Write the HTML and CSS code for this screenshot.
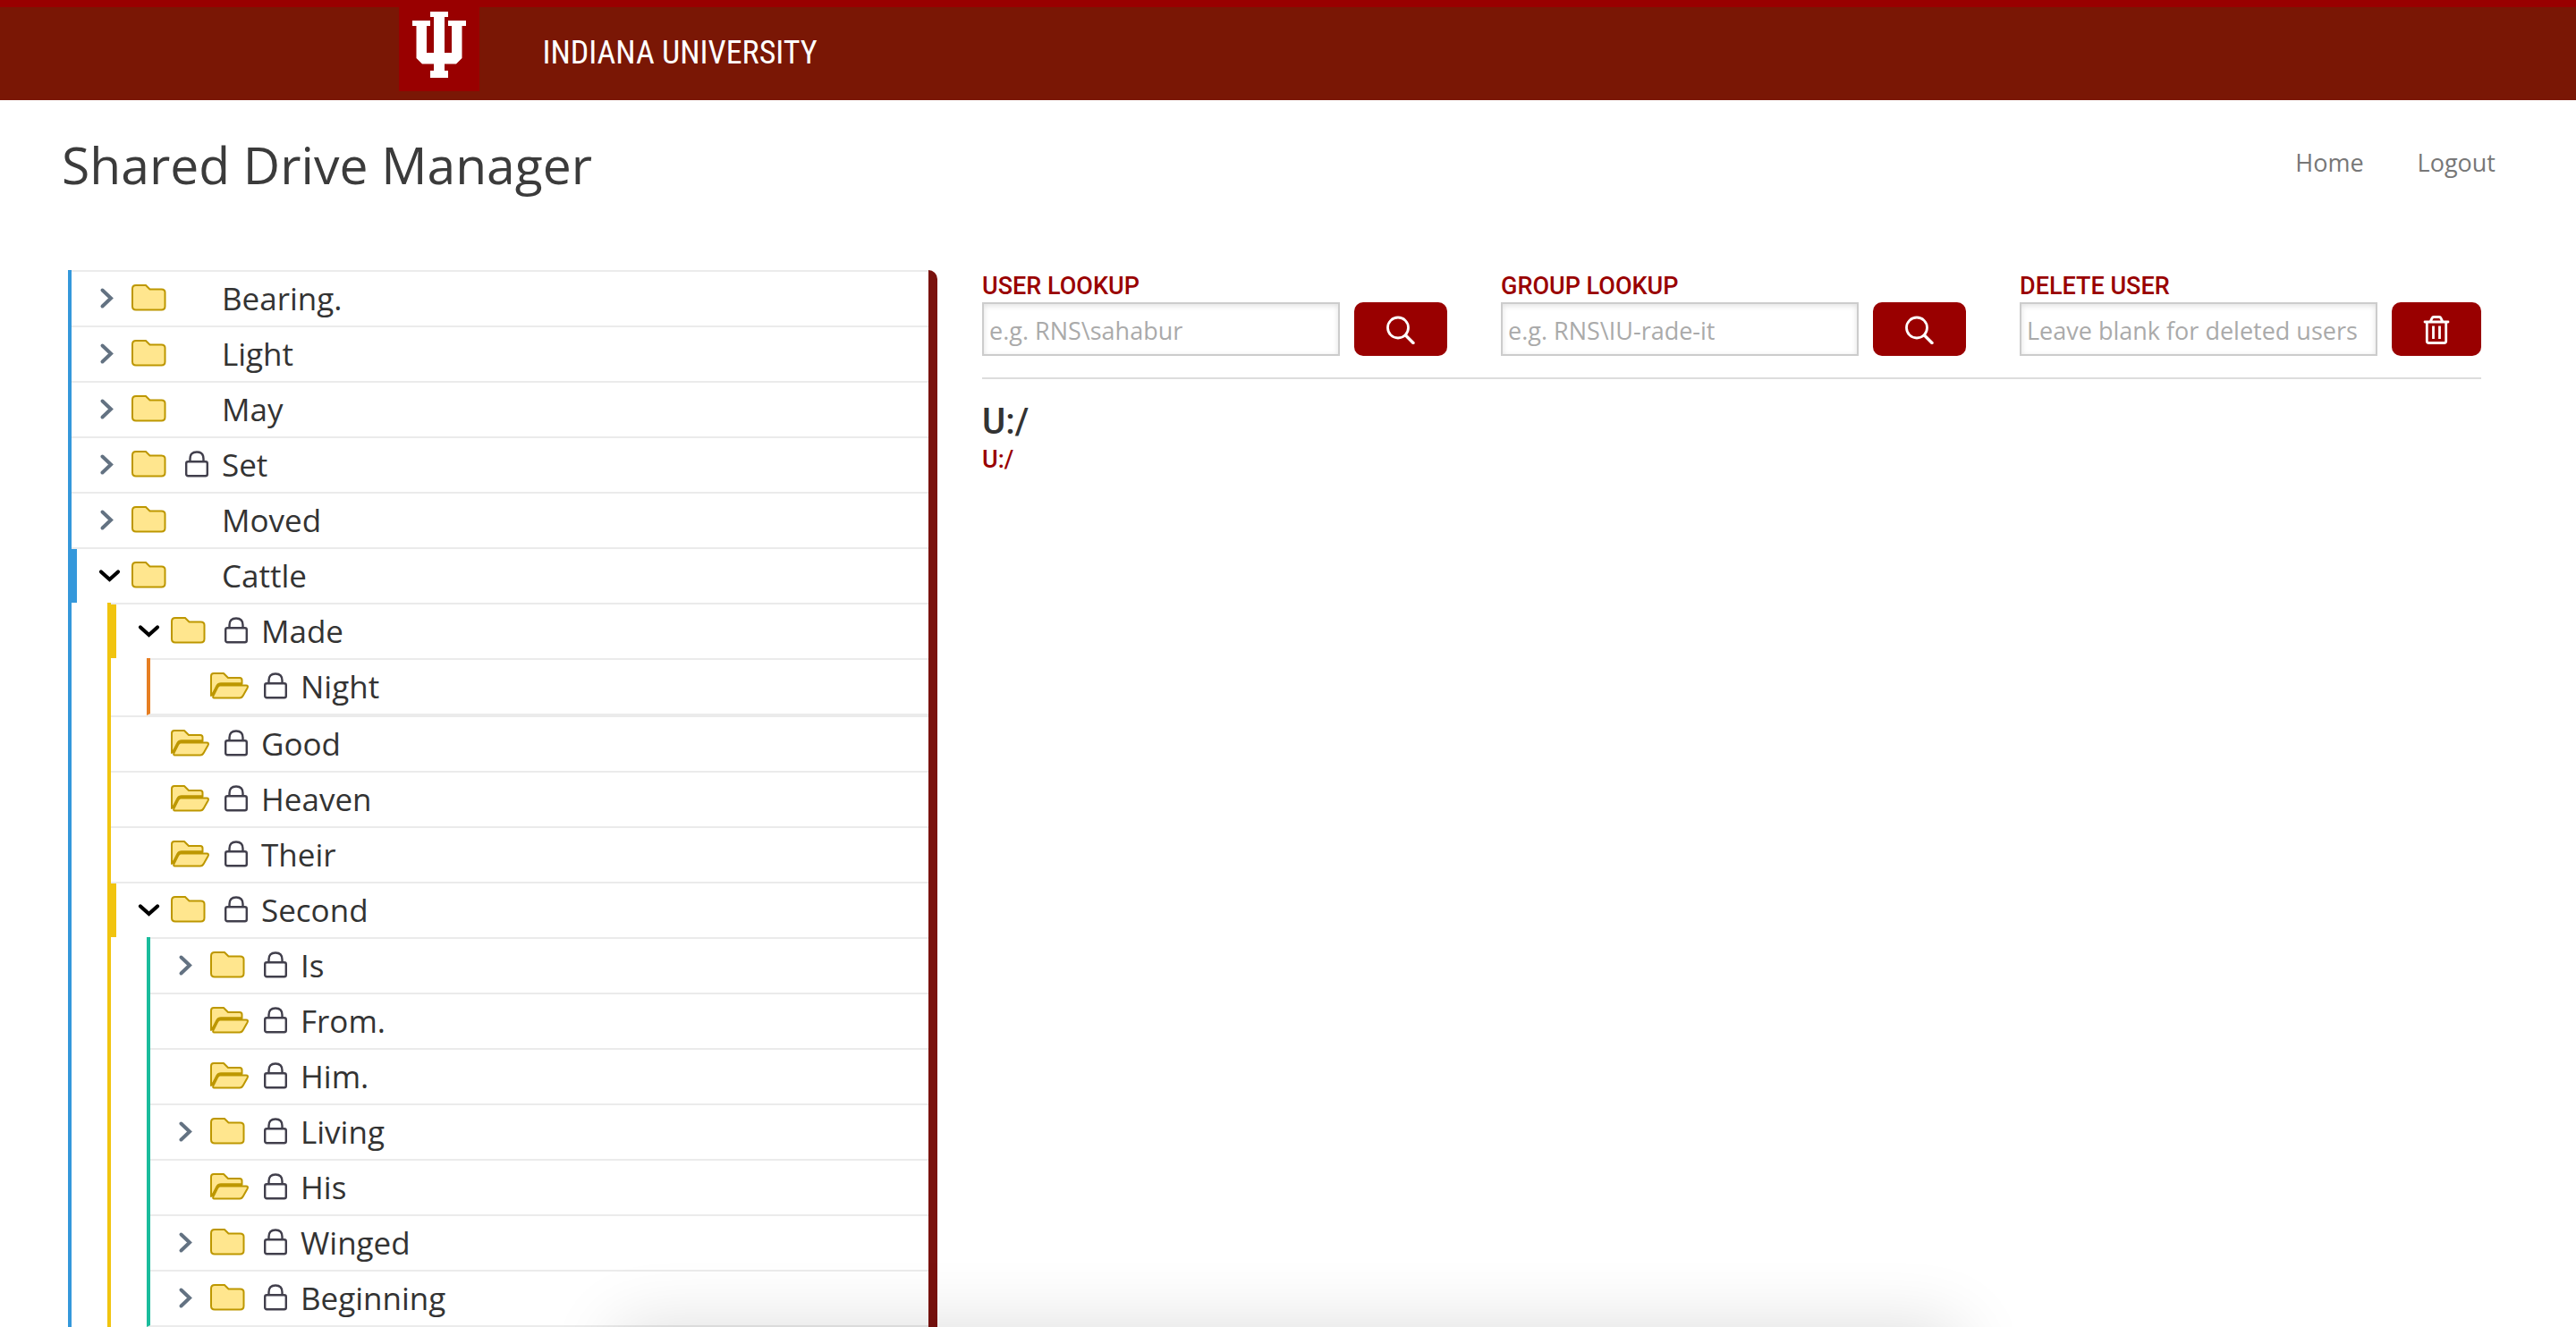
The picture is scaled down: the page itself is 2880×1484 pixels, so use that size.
FILE: index.html
```html
<!DOCTYPE html>
<html lang="en">
<head>
<meta charset="utf-8">
<meta name="viewport" content="width=device-width, initial-scale=1">
<title>Shared Drive Manager</title>
<link rel="stylesheet" href="styles.css">
</head>
<body>
<svg class="sprite" aria-hidden="true">
  <symbol id="chevron-right" viewBox="0 0 32 32"><path d="M8.500 6.500 L18 15.500 L8.500 24.500" fill="none" stroke="#637282" stroke-width="4" stroke-linecap="round" stroke-linejoin="miter"/></symbol>
  <symbol id="chevron-down" viewBox="0 0 32 32"><path d="M7 11.500 L16.500 20 L26 11.500" fill="none" stroke="#000" stroke-width="4.200" stroke-linecap="round" stroke-linejoin="miter"/></symbol>
  <symbol id="folder" viewBox="0 0 44 32"><path d="M1 5 Q1 1 5 1 H16 L20.500 5.500 H33.500 Q37.500 5.500 37.500 9 V24.500 Q37.500 28.500 33.500 28.500 H5 Q1 28.500 1 24.500 Z" fill="#ffe68e" stroke="#bd9700" stroke-width="2"/></symbol>
  <symbol id="folder-open" viewBox="0 0 44 32"><path d="M1 26 V4 Q1 1 4 1 H15 L20 6 H33 Q35.500 6 35.500 8.500 V13 H13 Q10 13 8.500 16 Z" fill="#ffe68e" stroke="#bd9700" stroke-width="2" stroke-linejoin="round"/><path d="M2 26 L7.500 15 Q9 12.500 12 12.500 H35" fill="none" stroke="#bd9700" stroke-width="2.400"/><path d="M11 14.500 H40 Q43 14.500 41.500 17.500 L37 25.500 Q35.500 28.500 33 28.500 H4.500 Q2.500 28.500 3.500 26 L8 17 Q9.500 14.500 11 14.500 Z" fill="#ffe68e" stroke="#bd9700" stroke-width="2"/></symbol>
  <symbol id="lock" viewBox="0 0 28 32"><path d="M6.500 13 V9 Q6.500 1.500 14 1.500 Q21.500 1.500 21.500 9 V13" fill="none" stroke="#413f4c" stroke-width="2.400"/><rect x="2.200" y="12.200" width="23.600" height="16" rx="2" fill="none" stroke="#413f4c" stroke-width="2.400"/></symbol>
  <symbol id="search" viewBox="0 0 32 32"><circle cx="13" cy="13.500" r="11.500" fill="none" stroke="#fff" stroke-width="2.800"/><path d="M21.500 22 L30 30.500" stroke="#fff" stroke-width="3.400" stroke-linecap="round"/></symbol>
  <symbol id="trash" viewBox="0 0 32 32"><path d="M3 7 H29 M9.500 6 L11 3 Q11.500 1.500 13 1.500 H19 Q20.500 1.500 21 3 L22.500 6" fill="none" stroke="#fff" stroke-width="2.800" stroke-linecap="round"/><path d="M5.300 7 V28.500 Q5.300 30.500 7.500 30.500 H24.500 Q26.700 30.500 26.700 28.500 V7 M12.500 11.500 V26 M19.500 11.500 V26" fill="none" stroke="#fff" stroke-width="2.800"/></symbol>
</svg>

<header class="brand-bar">
  <a class="brand" href="#">
    <svg class="trident" viewBox="0 0 90 102" aria-hidden="true"><rect width="90" height="102" fill="#900"/><path fill="#fff" d="M35 13 H55 V19 H51 V59 H59 V29 H55 V23 H75 V29 H70.500 V65 L64 71.500 H51 V79 H55 V87 H35 V79 H39 V71.500 H26 L19.500 65 V29 H15 V23 H35 V29 H31 V59 H39 V19 H35 Z"/></svg>
    <span class="brand-name">INDIANA UNIVERSITY</span>
  </a>
</header>

<div class="title-bar">
  <h1 class="title">Shared Drive Manager</h1>
  <nav class="site-nav"><a href="#">Home</a><a href="#">Logout</a></nav>
</div>

<main class="workspace">
  <section class="tree-panel" aria-label="Folders">
    <ul class="branch branch-blue" id="tree">
      <li><div class="row"><button class="toggle" aria-label="Expand"><svg><use href="#chevron-right"/></svg></button><svg class="folder"><use href="#folder"/></svg><span class="lock"></span><span class="name">Bearing.</span></div></li>
      <li><div class="row"><button class="toggle" aria-label="Expand"><svg><use href="#chevron-right"/></svg></button><svg class="folder"><use href="#folder"/></svg><span class="lock"></span><span class="name">Light</span></div></li>
      <li><div class="row"><button class="toggle" aria-label="Expand"><svg><use href="#chevron-right"/></svg></button><svg class="folder"><use href="#folder"/></svg><span class="lock"></span><span class="name">May</span></div></li>
      <li><div class="row"><button class="toggle" aria-label="Expand"><svg><use href="#chevron-right"/></svg></button><svg class="folder"><use href="#folder"/></svg><svg class="lock"><use href="#lock"/></svg><span class="name">Set</span></div></li>
      <li><div class="row"><button class="toggle" aria-label="Expand"><svg><use href="#chevron-right"/></svg></button><svg class="folder"><use href="#folder"/></svg><span class="lock"></span><span class="name">Moved</span></div></li>
      <li><div class="row open"><button class="toggle" aria-label="Collapse"><svg><use href="#chevron-down"/></svg></button><svg class="folder"><use href="#folder"/></svg><span class="lock"></span><span class="name">Cattle</span></div>
        <ul class="branch branch-yellow">
          <li><div class="row open"><button class="toggle" aria-label="Collapse"><svg><use href="#chevron-down"/></svg></button><svg class="folder"><use href="#folder"/></svg><svg class="lock"><use href="#lock"/></svg><span class="name">Made</span></div>
            <ul class="branch branch-orange">
              <li><div class="row"><span class="toggle"></span><svg class="folder"><use href="#folder-open"/></svg><svg class="lock"><use href="#lock"/></svg><span class="name">Night</span></div></li>
            </ul>
          </li>
          <li><div class="row"><span class="toggle"></span><svg class="folder"><use href="#folder-open"/></svg><svg class="lock"><use href="#lock"/></svg><span class="name">Good</span></div></li>
          <li><div class="row"><span class="toggle"></span><svg class="folder"><use href="#folder-open"/></svg><svg class="lock"><use href="#lock"/></svg><span class="name">Heaven</span></div></li>
          <li><div class="row"><span class="toggle"></span><svg class="folder"><use href="#folder-open"/></svg><svg class="lock"><use href="#lock"/></svg><span class="name">Their</span></div></li>
          <li><div class="row open"><button class="toggle" aria-label="Collapse"><svg><use href="#chevron-down"/></svg></button><svg class="folder"><use href="#folder"/></svg><svg class="lock"><use href="#lock"/></svg><span class="name">Second</span></div>
            <ul class="branch branch-teal">
              <li><div class="row"><button class="toggle" aria-label="Expand"><svg><use href="#chevron-right"/></svg></button><svg class="folder"><use href="#folder"/></svg><svg class="lock"><use href="#lock"/></svg><span class="name">Is</span></div></li>
              <li><div class="row"><span class="toggle"></span><svg class="folder"><use href="#folder-open"/></svg><svg class="lock"><use href="#lock"/></svg><span class="name">From.</span></div></li>
              <li><div class="row"><span class="toggle"></span><svg class="folder"><use href="#folder-open"/></svg><svg class="lock"><use href="#lock"/></svg><span class="name">Him.</span></div></li>
              <li><div class="row"><button class="toggle" aria-label="Expand"><svg><use href="#chevron-right"/></svg></button><svg class="folder"><use href="#folder"/></svg><svg class="lock"><use href="#lock"/></svg><span class="name">Living</span></div></li>
              <li><div class="row"><span class="toggle"></span><svg class="folder"><use href="#folder-open"/></svg><svg class="lock"><use href="#lock"/></svg><span class="name">His</span></div></li>
              <li><div class="row"><button class="toggle" aria-label="Expand"><svg><use href="#chevron-right"/></svg></button><svg class="folder"><use href="#folder"/></svg><svg class="lock"><use href="#lock"/></svg><span class="name">Winged</span></div></li>
              <li><div class="row"><button class="toggle" aria-label="Expand"><svg><use href="#chevron-right"/></svg></button><svg class="folder"><use href="#folder"/></svg><svg class="lock"><use href="#lock"/></svg><span class="name">Beginning</span></div></li>
            </ul>
          </li>
        </ul>
      </li>
    </ul>
  </section>

  <section class="details">
    <div class="lookups">
      <form class="lookup">
        <label for="user">USER LOOKUP</label>
        <div class="lookup-line"><input id="user" type="text" placeholder="e.g. RNS\sahabur"><button class="action" type="button" aria-label="Look up user"><svg><use href="#search"/></svg></button></div>
      </form>
      <form class="lookup">
        <label for="group">GROUP LOOKUP</label>
        <div class="lookup-line"><input id="group" type="text" placeholder="e.g. RNS\IU-rade-it"><button class="action" type="button" aria-label="Look up group"><svg><use href="#search"/></svg></button></div>
      </form>
      <form class="lookup">
        <label for="remove">DELETE USER</label>
        <div class="lookup-line"><input id="remove" type="text" placeholder="Leave blank for deleted users"><button class="action action-delete" type="button" aria-label="Delete user"><svg><use href="#trash"/></svg></button></div>
      </form>
    </div>
    <h2 class="path-title">U:/</h2>
    <a class="path-link" href="#">U:/</a>
  </section>
</main>
<div class="drawer-edge" aria-hidden="true"></div>
</body>
</html>
```
FILE: styles.css
```css
*, *::before, *::after { box-sizing: border-box; }

body {
  margin: 0;
  height: 100vh;
  display: flex;
  flex-direction: column;
  overflow: hidden;
  background: #fff;
  color: #333;
  font-family: "Open Sans", "Noto Sans", sans-serif;
}

.sprite { display: none; }

/* University branding */
.brand-bar {
  flex: none;
  height: 112px;
  padding-left: 15.5%;
  background: linear-gradient(#900 8px, #7a1705 8px);
}
.brand {
  display: inline-flex;
  gap: 70px;
  color: #fff;
  text-decoration: none;
}
.trident { width: 90px; height: 102px; }
.brand-name {
  padding-top: 37px;
  font: 400 36px/44px "Roboto Condensed", "Liberation Sans Narrow", sans-serif;
}

/* Page title and navigation */
.title-bar {
  flex: none;
  height: 190px;
  display: flex;
  justify-content: space-between;
  padding: 30px 90px 0 69px;
}
.title {
  margin: 0;
  color: #3b3b3b;
  font-size: 57px;
  font-weight: 400;
  line-height: 84px;
}
.site-nav {
  display: flex;
  gap: 60px;
  padding-top: 20px;
  font-size: 27px;
  line-height: 40px;
}
.site-nav a { color: #777; text-decoration: none; }

.workspace {
  flex: 1;
  min-height: 0;
  display: grid;
  grid-template-columns: minmax(0, 243fr) minmax(0, 419fr);
  grid-template-rows: 100%;
  gap: 50px;
  padding: 0 106px 0 76px;
}

/* Folder tree */
.tree-panel {
  overflow-y: auto;
  scrollbar-width: none;
  border-right: 10px solid #7a120e;
  border-top-right-radius: 10px;
}
.branch {
  margin: 0;
  padding: 0;
  list-style: none;
  border-left: 4px solid;
  border-bottom: 2px solid #ebebeb;
}
.branch .branch { margin-left: 40px; }
.branch-blue { border-left-color: #3498db; }
.branch-yellow { border-left-color: #f1c40f; }
.branch-orange { border-left-color: #e67e22; }
.branch-teal { border-left-color: #1abc9c; }

.row {
  height: 62px;
  display: flex;
  align-items: center;
  padding-left: 26px;
  border-top: 2px solid #ebebeb;
}
.row.open { padding-left: 0; }
.row.open::before {
  content: "";
  align-self: stretch;
  width: 6px;
  margin-right: 20px;
}
.branch-blue > li > .row.open::before { background: #3498db; }
.branch-yellow > li > .row.open::before { background: #f1c40f; }

.toggle {
  flex: none;
  width: 32px;
  height: 32px;
  margin: 0 9px 0 0;
  padding: 0;
  border: 0;
  background: none;
}
.toggle svg { display: block; width: 32px; height: 32px; }
.folder { flex: none; width: 44px; height: 32px; margin-right: 15px; }
.lock { flex: none; width: 28px; height: 32px; margin-right: 14px; }
.name { font-size: 35px; line-height: 60px; }

/* Lookup forms */
.lookups {
  display: grid;
  grid-template-columns: minmax(0, 130fr) minmax(0, 130fr) minmax(0, 129fr);
  gap: 60px;
  padding-bottom: 24px;
  border-bottom: 2px solid #ddd;
}
.lookup label {
  display: block;
  color: #900;
  font: 500 27px/36px Roboto, sans-serif;
}
.lookup-line { display: flex; gap: 16px; }
.lookup input {
  flex: 1;
  min-width: 0;
  height: 60px;
  padding: 2px 6px 0;
  border: 2px solid #ccc;
  border-radius: 0;
  background: #fff;
  box-shadow: inset 0 2px 6px rgba(0, 0, 0, .12);
  font: 400 27px/40px "Open Sans", "Noto Sans", sans-serif;
}
.lookup input::placeholder { color: #aaa; }
.action {
  width: 104px;
  height: 60px;
  display: grid;
  place-items: center;
  padding: 2px 0 0;
  border: 0;
  border-radius: 10px;
  background: #900;
}
.action-delete { width: 100px; }
.action svg { width: 32px; height: 32px; }

/* Selected path */
.path-title {
  margin: 24px 0 0;
  font: 500 40px/48px Roboto, sans-serif;
}
.path-link {
  display: block;
  color: #900;
  font: 500 27px/36px Roboto, sans-serif;
  text-decoration: none;
}

/* Closed bottom drawer, of which only the shadow shows */
.drawer-edge {
  position: fixed;
  top: 100%;
  left: 24%;
  right: 24%;
  height: 200px;
  box-shadow: 0 0 80px rgba(0, 0, 0, .14);
}
```
